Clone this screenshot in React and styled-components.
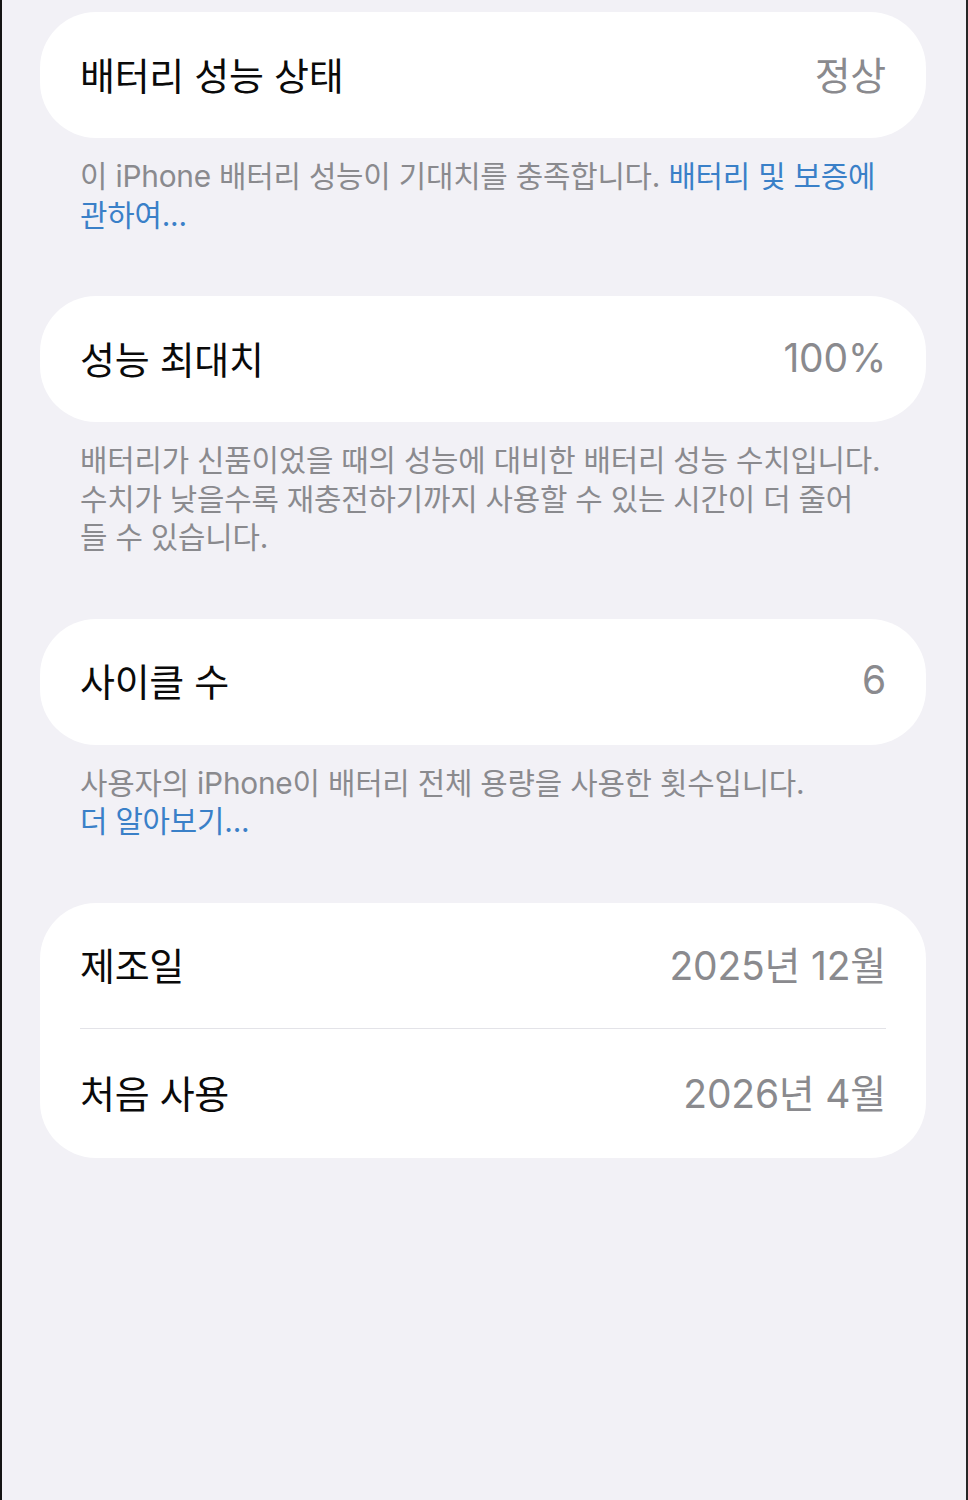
import React from "react";
import styled, { createGlobalStyle } from "styled-components";

const GlobalStyle = createGlobalStyle`
    html, body {
        margin: 0;
        padding: 0;
        background: #f2f1f6;
    }
    body {
        font-family: "Inter", "Noto Sans CJK KR", sans-serif;
        -webkit-font-smoothing: antialiased;
    }
`;

const Screen = styled.div`
    min-height: 1500px;
    box-sizing: border-box;
    background: #f2f1f6;
    border-left: 2px solid #141414;
    border-right: 2px solid #262626;
    padding: 12px 40px 0 38px;
`;

const Section = styled.section`
    & + & {
        margin-top: 62px;
    }
`;

const Card = styled.div`
    background: #ffffff;
    border-radius: 56px;
    padding: 0 40px;
`;

const Row = styled.div`
    display: flex;
    align-items: center;
    justify-content: space-between;
    height: ${(p) => p.$height || 126}px;
    border-top: ${(p) => (p.$divided ? "1px solid #e3e3e8" : "none")};
`;

const Label = styled.span`
    font-size: 38px;
    color: #0a0a0a;
    letter-spacing: -0.3px;
    transform: translateY(-2px);
`;

const Value = styled.span`
    font-size: 39px;
    color: #8a8a8e;
    letter-spacing: -0.2px;
    transform: translateY(-2px);
`;

const Footer = styled.div`
    padding: 19px 40px 0;
    font-size: 29.8px;
    color: #8a8a8e;
    letter-spacing: -0.2px;
`;

// each footer line gets a fixed box so mixed Latin/Hangul fonts don't stretch it
const Line = styled.div`
    height: 38.5px;
    line-height: 38.5px;
    white-space: nowrap;
`;

const Link = styled.a`
    color: #3a80c8;
    text-decoration: none;
`;

export default function App() {
    return (
        <>
            <GlobalStyle />
            <Screen>
                <Section>
                    <Card>
                        <Row>
                            <Label>배터리 성능 상태</Label>
                            <Value>정상</Value>
                        </Row>
                    </Card>
                    <Footer>
                        <Line>
                            이 iPhone 배터리 성능이 기대치를 충족합니다. <Link>배터리 및 보증에</Link>
                        </Line>
                        <Line>
                            <Link>관하여...</Link>
                        </Line>
                    </Footer>
                </Section>

                <Section>
                    <Card>
                        <Row>
                            <Label>성능 최대치</Label>
                            <Value>100%</Value>
                        </Row>
                    </Card>
                    <Footer>
                        <Line>배터리가 신품이었을 때의 성능에 대비한 배터리 성능 수치입니다.</Line>
                        <Line>수치가 낮을수록 재충전하기까지 사용할 수 있는 시간이 더 줄어</Line>
                        <Line>들 수 있습니다.</Line>
                    </Footer>
                </Section>

                <Section>
                    <Card>
                        <Row>
                            <Label>사이클 수</Label>
                            <Value>6</Value>
                        </Row>
                    </Card>
                    <Footer>
                        <Line>사용자의 iPhone이 배터리 전체 용량을 사용한 횟수입니다.</Line>
                        <Line>
                            <Link>더 알아보기...</Link>
                        </Line>
                    </Footer>
                </Section>

                <Section>
                    <Card>
                        <Row $height={125}>
                            <Label>제조일</Label>
                            <Value>2025년 12월</Value>
                        </Row>
                        <Row $height={129} $divided>
                            <Label>처음 사용</Label>
                            <Value>2026년 4월</Value>
                        </Row>
                    </Card>
                </Section>
            </Screen>
        </>
    );
}
